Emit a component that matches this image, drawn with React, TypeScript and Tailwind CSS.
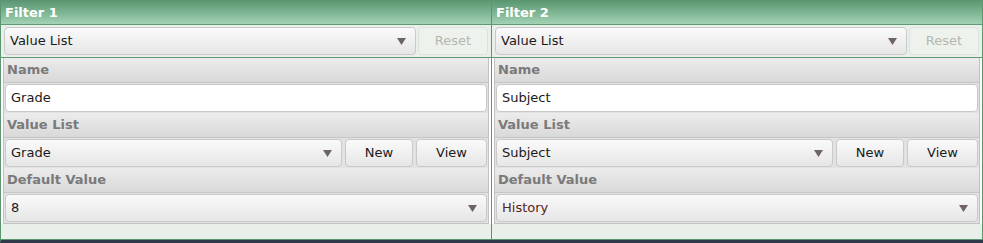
import React from 'react';

const font = { fontFamily: '"DejaVu Sans", Verdana, sans-serif' };

const Arrow = () => (
  <svg width="9" height="7" viewBox="0 0 9 7" className="shrink-0">
    <path d="M0 0 H9 L4.5 7 Z" fill="#6e6562" />
  </svg>
);

const Select = ({ value, color = 'text-[#1a1a1a]' }: { value: string; color?: string }) => (
  <div className="flex h-[28px] min-w-0 flex-1 items-center justify-between rounded-[4px] border border-[#c9c9c9] bg-gradient-to-b from-[#fafafa] to-[#e6e6e6] pl-[5px] pr-[9px]">
    <span className={`text-[13px] ${color}`}>{value}</span>
    <Arrow />
  </div>
);

const Button = ({ label, w, disabled }: { label: string; w: string; disabled?: boolean }) => (
  <div
    className={`flex h-[28px] shrink-0 items-center justify-center rounded-[4px] border text-[13px] ${w} ${
      disabled
        ? 'border-[#dbe3dc] bg-[#eef2ec] text-[#b3b8b0]'
        : 'border-[#c9c9c9] bg-gradient-to-b from-[#fafafa] to-[#e6e6e6] text-[#1a1a1a]'
    }`}
  >
    {label}
  </div>
);

const Label = ({ text }: { text: string }) => (
  <div className="flex h-[25px] items-center border-b border-[#c6c6c6] bg-gradient-to-b from-[#ececec] to-[#d9d9d9] pl-[3px] text-[13px] font-bold text-[#7a7a7a]">
    {text}
  </div>
);

const FilterColumn = ({
  title,
  name,
  list,
  def,
  defColor,
}: {
  title: string;
  name: string;
  list: string;
  def: string;
  defColor?: string;
}) => (
  <div className="flex flex-1 flex-col border-r border-[#5b9670]">
    <div className="flex h-[24px] items-center border-b border-[#5f9a73] bg-gradient-to-b from-[#5a9872] to-[#a2d2b4] pl-[4px] text-[13px] font-bold text-white">
      {title}
    </div>
    <div className="flex gap-[2px] border-b border-[#5f9a73] bg-[#e8f0e9] px-[3px] py-[2px]">
      <Select value="Value List" />
      <Button label="Reset" w="w-[70px]" disabled />
    </div>
    <div className="mx-[2px] border-x border-b border-[#c2c2c2] bg-[#e2e2e2]">
      <Label text="Name" />
      <div className="p-[1px]">
        <div className="flex h-[28px] items-center rounded-[4px] border border-[#c9c9c9] bg-white pl-[5px] text-[13px] text-[#1a1a1a]">
          {name}
        </div>
      </div>
      <Label text="Value List" />
      <div className="flex gap-[3px] p-[1px]">
        <Select value={list} />
        <Button label="New" w="w-[68px]" />
        <Button label="View" w="w-[71px]" />
      </div>
      <Label text="Default Value" />
      <div className="p-[1px]">
        <Select value={def} color={defColor} />
      </div>
    </div>
    <div className="flex-1 bg-[#e8f0e9]" />
  </div>
);

export default function App() {
  return (
    <div className="h-[243px] w-[983px] bg-white" style={font}>
      <div className="flex h-[243px] flex-col border-l border-t border-[#5b9670] border-b-[3px] border-b-[#2e3a4a]">
        <div className="flex flex-1 border-b border-[#5b9670]">
          <FilterColumn title="Filter 1" name="Grade" list="Grade" def="8" />
          <FilterColumn title="Filter 2" name="Subject" list="Subject" def="History" defColor="text-[#5a2414]" />
        </div>
      </div>
    </div>
  );
}
